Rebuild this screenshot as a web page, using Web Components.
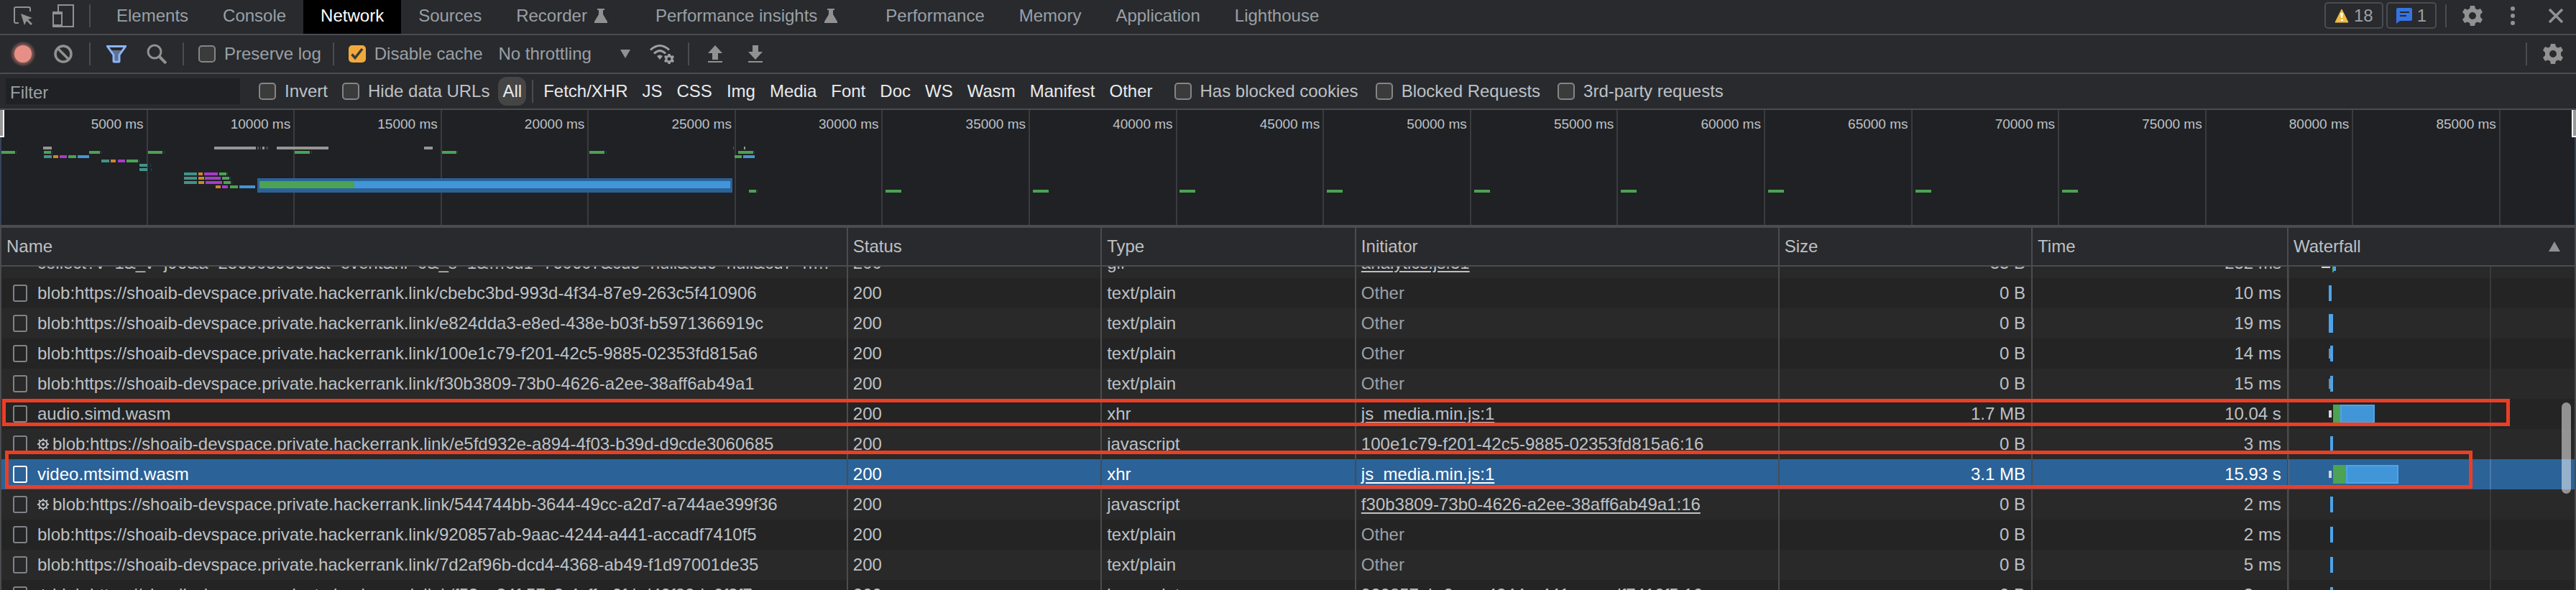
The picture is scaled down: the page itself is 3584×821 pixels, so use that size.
<!DOCTYPE html>
<html lang="en">
<head>
    <meta charset="UTF-8">
    <meta name="viewport" content="width=device-width, initial-scale=1.0">
    <title>DevTools - Network</title>
    <style>
        :root {
            --bar: #292a2d;
            --base: #202124;
            --line: #4a4c50;
            --muted: #9aa0a6;
            --text: #bdc1c6;
            --icon: #919191;
            --selected: #2b6298;
        }
        body {
            margin: 0;
            background: var(--base);
            color: var(--text);
            font: 24px/28px "Liberation Sans", Arial, sans-serif;
        }
    </style>
</head>
<body>

    <dev-tools></dev-tools>

    <template id="dev-tools-template">
        <style>
            :host {
                display: flex;
                flex-direction: column;
                height: 100vh;
                overflow: hidden;
            }
            network-log {
                flex: 1;
                min-height: 0;
            }
        </style>
        <main-tabs></main-tabs>
        <network-toolbar></network-toolbar>
        <filter-bar></filter-bar>
        <network-overview></network-overview>
        <network-log></network-log>
    </template>

    <template id="main-tabs-template">
        <style>
            :host {
                display: flex;
                align-items: center;
                height: 47px;
                padding-left: 4px;
                background: var(--bar);
                border-bottom: 2px solid var(--line);
            }
            nav {
                display: flex;
                align-self: stretch;
                margin-left: 4px;
                flex: 1;
            }
            .counters {
                display: flex;
                gap: 4px;
                margin-right: 4px;
            }
            .counter {
                display: flex;
                align-items: center;
                gap: 7px;
                height: 37px;
                padding: 0 12px;
                border: 2px solid var(--line);
                border-radius: 5px;
                box-sizing: border-box;
                background: none;
                color: var(--muted);
                font: inherit;
            }
            .close {
                margin-left: 4px;
            }
            tool-divider, tool-button, .counters {
                margin-bottom: 4px;
            }
        </style>
        <tool-button icon="inspect" label="Select an element"></tool-button>
        <tool-button icon="device" label="Toggle device toolbar"></tool-button>
        <tool-divider></tool-divider>
        <nav>
            <tab-item>Elements</tab-item>
            <tab-item>Console</tab-item>
            <tab-item active>Network</tab-item>
            <tab-item>Sources</tab-item>
            <tab-item>Recorder<svg-icon slot="icon" name="flask"></svg-icon></tab-item>
            <tab-item>Performance insights<svg-icon slot="icon" name="flask"></svg-icon></tab-item>
            <tab-item>Performance</tab-item>
            <tab-item>Memory</tab-item>
            <tab-item>Application</tab-item>
            <tab-item>Lighthouse</tab-item>
        </nav>
        <div class="counters">
            <button class="counter"><svg-icon name="warning"></svg-icon>18</button>
            <button class="counter"><svg-icon name="message"></svg-icon>1</button>
        </div>
        <tool-divider></tool-divider>
        <tool-button icon="gear" label="Settings"></tool-button>
        <tool-button icon="dots" label="More"></tool-button>
        <tool-button class="close" icon="close" label="Close"></tool-button>
    </template>

    <template id="tab-item-template">
        <style>
            :host {
                display: flex;
            }
            button {
                display: flex;
                align-items: center;
                padding: 0 24px 4px;
                border: 0;
                background: none;
                color: var(--muted);
                font: inherit;
                white-space: nowrap;
            }
            :host([active]) button {
                background: #000;
                color: #fff;
            }
            ::slotted(svg-icon) {
                margin: 0 19px 0 10px;
            }
        </style>
        <button><slot></slot><slot name="icon"></slot></button>
    </template>

    <template id="network-toolbar-template">
        <style>
            :host {
                display: flex;
                align-items: center;
                height: 52px;
                padding: 0 4px;
                background: var(--bar);
                border-bottom: 2px solid var(--line);
                color: var(--muted);
            }
            check-box {
                padding: 0 8px 0 12px;
            }
            .throttling {
                display: grid;
                align-items: center;
                width: 214px;
            }
            select, .throttling svg-icon {
                grid-area: 1 / 1;
            }
            select {
                appearance: none;
                padding: 0 14px;
                border: 0;
                background: none;
                color: inherit;
                font: inherit;
            }
            .throttling svg-icon {
                justify-self: end;
                margin-right: 16px;
                pointer-events: none;
            }
            .space {
                flex: 1;
            }
        </style>
        <tool-button icon="record" label="Stop recording"></tool-button>
        <tool-button icon="clear" label="Clear"></tool-button>
        <tool-divider></tool-divider>
        <tool-button icon="funnel" label="Filter"></tool-button>
        <tool-button icon="search" label="Search"></tool-button>
        <tool-divider></tool-divider>
        <check-box>Preserve log</check-box>
        <tool-divider></tool-divider>
        <check-box checked>Disable cache</check-box>
        <div class="throttling">
            <select aria-label="Throttling"><option>No throttling</option></select>
            <svg-icon name="down"></svg-icon>
        </div>
        <tool-button icon="wifi" label="Network conditions"></tool-button>
        <tool-divider></tool-divider>
        <tool-button icon="import" label="Import HAR file"></tool-button>
        <tool-button icon="export" label="Export HAR file"></tool-button>
        <div class="space"></div>
        <tool-divider></tool-divider>
        <tool-button icon="gear" label="Network settings"></tool-button>
    </template>

    <template id="filter-bar-template">
        <style>
            :host {
                display: flex;
                align-items: center;
                height: 48px;
                padding-left: 8px;
                background: var(--bar);
                border-bottom: 2px solid var(--line);
            }
            input {
                box-sizing: border-box;
                width: 326px;
                height: 36px;
                margin-right: 26px;
                padding: 4px 6px 0;
                border: 0;
                background: var(--base);
                color: var(--text);
                font: inherit;
            }
            input::placeholder {
                color: var(--muted);
            }
            check-box {
                margin-right: 20px;
            }
            .types ~ check-box {
                margin-right: 24px;
            }
            .types {
                display: flex;
                align-items: center;
                gap: 8px;
                margin: 0 24px 0 -8px;
            }
            .types button {
                height: 40px;
                padding: 0 6px;
                border: 0;
                border-radius: 12px;
                background: none;
                color: #e8eaed;
                font: inherit;
            }
            .types button.on {
                background: #454545;
            }
            tool-divider {
                margin: 0;
            }
        </style>
        <input type="text" placeholder="Filter" aria-label="Filter">
        <check-box>Invert</check-box>
        <check-box>Hide data URLs</check-box>
        <div class="types">
            <button class="on">All</button>
            <tool-divider></tool-divider>
            <button>Fetch/XHR</button>
            <button>JS</button>
            <button>CSS</button>
            <button>Img</button>
            <button>Media</button>
            <button>Font</button>
            <button>Doc</button>
            <button>WS</button>
            <button>Wasm</button>
            <button>Manifest</button>
            <button>Other</button>
        </div>
        <check-box>Has blocked cookies</check-box>
        <check-box>Blocked Requests</check-box>
        <check-box>3rd-party requests</check-box>
    </template>

    <template id="check-box-template">
        <style>
            :host {
                display: block;
            }
            label {
                display: flex;
                align-items: center;
                gap: 12px;
                white-space: nowrap;
            }
            .box {
                display: grid;
            }
            input, svg {
                grid-area: 1 / 1;
            }
            input {
                appearance: none;
                box-sizing: border-box;
                width: 24px;
                height: 24px;
                margin: 0;
                border: 2px solid #858585;
                border-radius: 5px;
                background: #3b3b3b;
            }
            input:checked {
                border-color: #f2a93b;
                background: #f2a93b;
            }
            svg {
                display: none;
                pointer-events: none;
            }
            input:checked + svg {
                display: block;
            }
        </style>
        <label>
            <span class="box">
                <input type="checkbox">
                <svg width="24" height="24" viewBox="0 0 24 24"><path d="M4.5 12.5l4.5 5L19 5" fill="none" stroke="#3b3b3b" stroke-width="3.5"/></svg>
            </span>
            <slot></slot>
        </label>
    </template>

    <template id="tool-button-template">
        <style>
            :host {
                display: block;
            }
            button {
                display: grid;
                place-items: center;
                width: 56px;
                height: 40px;
                padding: 0;
                border: 0;
                background: none;
            }
        </style>
        <button><svg-icon></svg-icon></button>
    </template>

    <template id="tool-divider-template">
        <style>
            :host {
                display: block;
                width: 2px;
                height: 32px;
                margin: 0 8px;
                background: var(--line);
            }
        </style>
    </template>

    <template id="network-overview-template">
        <style>
            :host {
                display: grid;
                height: 160px;
                border-bottom: 4px solid var(--line);
                background: var(--base);
            }
            .ruler, svg, .window {
                grid-area: 1 / 1;
            }
            .ruler {
                display: grid;
                grid-template-columns: repeat(17, 5.71%);
                padding-left: 1px;
                font-size: 19px;
                text-align: right;
            }
            .ruler span {
                padding: 6px 4px 0 0;
                border-right: 2px solid #3a3b3e;
            }
            svg {
                width: 100%;
                height: 160px;
                z-index: 1;
            }
            .window {
                display: flex;
                justify-content: space-between;
                border: solid #36445a;
                border-width: 0 2px;
                z-index: 2;
            }
            .grip {
                width: 4px;
                height: 36px;
                margin-left: -2px;
                background: #999;
                border: solid #fff;
                border-width: 0 2px 2px 0;
            }
            .grip.end {
                margin: 0 -2px 0 0;
                border-width: 0 0 2px 2px;
            }
        </style>
        <div class="ruler"></div>
        <svg viewBox="0 0 3584 160" preserveAspectRatio="none" shape-rendering="crispEdges"></svg>
        <div class="window"><div class="grip"></div><div class="grip end"></div></div>
    </template>

    <template id="network-log-template">
        <style>
            :host {
                display: block;
                position: relative;
                border: solid var(--line);
                border-width: 0 2px;
            }
            .scroller {
                height: 100%;
                overflow: hidden;
            }
            table {
                width: 100%;
                table-layout: fixed;
                border-collapse: separate;
                border-spacing: 0;
            }
            th, td {
                box-sizing: border-box;
                padding: 0 8px 0 7px;
                border-right: 2px solid var(--line);
                overflow: hidden;
                white-space: nowrap;
                text-align: left;
                font-weight: normal;
            }
            th:last-child, td:last-child {
                border-right: 0;
            }
            th {
                position: sticky;
                top: 0;
                z-index: 1;
                height: 54px;
                border-bottom: 2px solid var(--line);
                background: var(--bar);
            }
            .sort {
                display: flex;
                justify-content: space-between;
                align-items: center;
                padding-right: 12px;
            }
            td {
                height: 42px;
            }
            tr {
                background: #292929;
            }
            tr:nth-child(even) {
                background: #242424;
            }
            tr.selected {
                background: var(--selected);
                color: #fff;
            }
            .name {
                display: flex;
                align-items: center;
                padding-left: 9px;
            }
            .name input {
                appearance: none;
                flex: none;
                box-sizing: border-box;
                width: 20px;
                height: 24px;
                margin: 0 14px 0 0;
                border: 2px solid #7f8387;
                border-radius: 3px;
            }
            .name .blank {
                visibility: hidden;
            }
            .selected .name input {
                border-color: #fff;
            }
            .name svg-icon {
                margin-right: 5px;
            }
            .name span {
                overflow: hidden;
                text-overflow: ellipsis;
            }
            td.num {
                text-align: right;
            }
            .other {
                color: var(--muted);
            }
            a {
                color: inherit;
                text-underline-offset: 3px;
            }
            td.fall {
                padding: 0;
            }
            td.fall svg {
                display: block;
                width: 100%;
                height: 42px;
            }
            .thumb {
                position: absolute;
                top: 243px;
                right: 5px;
                width: 13px;
                height: 127px;
                border-radius: 7px;
                background: rgba(255, 255, 255, 0.5);
            }
            /* hand drawn markers round the two wasm requests */
            .mark {
                position: absolute;
                z-index: 2;
                box-sizing: border-box;
                border: 5px solid #ec3e24;
            }
            .mark.audio {
                top: 238px;
                left: 1px;
                right: 90px;
                height: 38px;
            }
            .mark.video {
                top: 310px;
                left: 5px;
                right: 142px;
                height: 53px;
            }
        </style>
        <div class="scroller">
            <table>
                <colgroup>
                    <col style="width: 32.9%"><col style="width: 9.87%"><col style="width: 9.88%"><col style="width: 16.45%">
                    <col style="width: 9.84%"><col style="width: 9.94%"><col>
                </colgroup>
                <thead>
                    <tr>
                        <th>Name</th><th>Status</th><th>Type</th><th>Initiator</th><th>Size</th><th>Time</th>
                        <th><div class="sort">Waterfall<svg-icon name="up"></svg-icon></div></th>
                    </tr>
                </thead>
                <tbody></tbody>
            </table>
        </div>
        <div class="mark audio"></div>
        <div class="mark video"></div>
        <div class="thumb"></div>
    </template>

    <script>
        // Every icon as [width, height, markup]
        const GEAR = "M11 0h6l1 4 3 1.5 4-1.5 3 5-3 3v4l3 3-3 5-4-1.5-3 1.5-1 4h-6l-1-4-3-1.5-4 1.5-3-5 3-3v-4l-3-3 3-5 4 1.5 3-1.5zM14 9a5 5 0 1 0 0 10 5 5 0 0 0 0-10z";
        const ICONS = {
            inspect: [28, 28, `<path d="M8 24H4a2 2 0 0 1-2-2V4a2 2 0 0 1 2-2h18a2 2 0 0 1 2 2v4" fill="none" stroke="#919191" stroke-width="2"/><path d="M11 11l16 6-6 2 6 6-2 2-6-6-3 6z"/>`],
            device: [30, 32, `<path d="M8 10V1h21v30H12" fill="none" stroke="#919191" stroke-width="2"/><path d="M0 10h14v22H0zM2 14v14h10V14z" fill-rule="evenodd"/>`],
            flask: [18, 20, `<path d="M4 0h10v2h-2v6l6 10v2H0v-2l6-10V2H4z"/>`],
            warning: [20, 20, `<path d="M10 1l9 18H1z" fill="#f0bd41" stroke="#f0bd41" stroke-linejoin="round"/><path d="M8 6h4l-1 7H9zM9 15h3v2H9z" fill="#fff"/>`],
            message: [22, 22, `<path d="M2 0h18a2 2 0 0 1 2 2v14a2 2 0 0 1-2 2H5l-5 4V2a2 2 0 0 1 2-2z" fill="#3574e2"/><path d="M5 5h13v2H5zM5 10h9v2H5z" fill="#292a2d"/>`],
            gear: [28, 28, `<path fill-rule="evenodd" d="${GEAR}"/>`],
            dots: [6, 28, `<circle cx="3" cy="4" r="3"/><circle cx="3" cy="14" r="3"/><circle cx="3" cy="24" r="3"/>`],
            close: [20, 20, `<path d="M1 1l18 18M19 1L1 19" stroke="#919191" stroke-width="3.5"/>`],
            record: [40, 40, `<defs><radialGradient id="g"><stop offset=".6" stop-color="#e78f86" stop-opacity=".6"/><stop offset="1" stop-color="#e78f86" stop-opacity="0"/></radialGradient></defs><circle cx="20" cy="20" r="18" fill="url(#g)"/><circle cx="20" cy="20" r="12" fill="#e78f86"/>`],
            clear: [26, 26, `<g fill="none" stroke="#919191" stroke-width="3.5"><circle cx="13" cy="13" r="11"/><path d="M5 5l16 16"/></g>`],
            funnel: [28, 26, `<path d="M7 8h14l-3 7v9h-8v-9z" fill="#5f718f"/><path d="M1.5 2.5h25l-8.500 12v8.500q0 1-1 1h-6q-1 0-1-1v-8.500z" fill="none" stroke="#8ab4f8" stroke-width="3"/>`],
            search: [28, 28, `<g fill="none" stroke="#919191" stroke-width="3"><circle cx="11" cy="11" r="9"/><path d="M17 17l10 10" stroke-width="4"/></g>`],
            down: [14, 12, `<path d="M0 0h14L7 12z"/>`],
            up: [16, 14, `<path d="M8 0l8 14H0z"/>`],
            wifi: [34, 28, `<g fill="none" stroke="#9aa0a6" stroke-width="3"><path d="M1 8.500q13-12 26 0M6 13.500q8-8 16 0"/></g><path d="M10 17q4-3 8 0l-4 5z" fill="#9aa0a6"/><circle cx="27" cy="21" r="8" fill="#292a2d"/><g transform="translate(20 14) scale(.5)"><path fill="#9aa0a6" fill-rule="evenodd" d="${GEAR}"/></g>`],
            import: [20, 24, `<path d="M10 0l10 11h-6v9H6v-9H0zM0 22h20v2H0z"/>`],
            export: [20, 24, `<path d="M6 0h8v9h6L10 20 0 9h6zM0 22h20v2H0z"/>`],
            worker: [16, 16, `<circle cx="8" cy="8" r="5.5" fill="none" stroke="#bdc1c6" stroke-width="2"/><circle cx="8" cy="8" r="2" fill="#bdc1c6"/><path d="M8 0v3M8 13v3M0 8h3M13 8h3M2 2l2 2M12 12l2 2M14 2l-2 2M4 12l-2 2" stroke="#bdc1c6" stroke-width="2"/>`]
        };

        const HOST = "blob:https://shoaib-devspace.private.hackerrank.link/";
        const BLUE = "#4ca4ea";
        const TINY = [[58, 10, 4, 22, BLUE]];
        const QUEUED = [[56, 14, 2, 14, "#858585"], [58, 10, 4, 22, BLUE]];

        // name, type, initiator, size, time, waterfall rects, extras
        const REQUESTS = [
            ["collect?v=1&_v=j96&a=2868089866&t=event&ni=0&_s=1&…cd1=760607&cd5=null&cd6=null&cd7=n…", "gif", "analytics.js:31", "35 B", "232 ms", [[46, 24, 12, 4, "#d5d5d5"], [61, 8, 2, 26, "#4ba353"], [62, 10, 4, 22, BLUE]], { link: true, blank: true }],
            [HOST + "cbebc3bd-993d-4f34-87e9-263c5f410906", "text/plain", "Other", "0 B", "10 ms", [[56, 10, 4, 22, BLUE]]],
            [HOST + "e824dda3-e8ed-438e-b03f-b5971366919c", "text/plain", "Other", "0 B", "19 ms", [[56, 8, 6, 26, BLUE]]],
            [HOST + "100e1c79-f201-42c5-9885-02353fd815a6", "text/plain", "Other", "0 B", "14 ms", QUEUED],
            [HOST + "f30b3809-73b0-4626-a2ee-38aff6ab49a1", "text/plain", "Other", "0 B", "15 ms", QUEUED],
            ["audio.simd.wasm", "xhr", "js_media.min.js:1", "1.7 MB", "10.04 s", [[56, 16, 4, 10, "#d5d5d5"], [62, 8, 10, 26, "#4ba353"], [72, 8, 48, 26, BLUE], [74, 10, 44, 22, "#4196d8"]], { link: true }],
            [HOST + "e5fd932e-a894-4f03-b39d-d9cde3060685", "javascript", "100e1c79-f201-42c5-9885-02353fd815a6:16", "0 B", "3 ms", TINY, { link: true, worker: true }],
            ["video.mtsimd.wasm", "xhr", "js_media.min.js:1", "3.1 MB", "15.93 s", [[56, 16, 4, 10, "#d5d5d5"], [62, 8, 18, 26, "#4ba353"], [80, 8, 73, 26, BLUE], [82, 10, 69, 22, "#4196d8"]], { link: true, selected: true }],
            [HOST + "544744bb-3644-49cc-a2d7-a744ae399f36", "javascript", "f30b3809-73b0-4626-a2ee-38aff6ab49a1:16", "0 B", "2 ms", TINY, { link: true, worker: true }],
            [HOST + "920857ab-9aac-4244-a441-accadf7410f5", "text/plain", "Other", "0 B", "2 ms", TINY],
            [HOST + "7d2af96b-dcd4-4368-ab49-f1d97001de35", "text/plain", "Other", "0 B", "5 ms", TINY],
            [HOST + "f53ce34f-57c3-4cff-a0fd-d49f82da0f3f7", "javascript", "920857ab-9aac-4244-a441-accadf7410f5:16", "0 B", "3 ms", TINY, { link: true, worker: true }]
        ];

        // Overview bars: letter is the phase, then [lane, x, width]
        const PHASES = { g: "#4ba353", b: "#4196d8", t: "#429387", o: "#ce852d", p: "#a53dc6", q: "#959595", d: "#1d4766", s: "#5a5a5a" };
        const BARS = {
            q: [[0, 60, 12], [0, 298, 58], [0, 365, 3], [0, 385, 72], [0, 590, 12], [0, 1035, 2]],
            s: [[0, 358, 2], [0, 362, 1], [0, 370, 1], [0, 372, 1], [0, 1020, 1]],
            g: [[1, 0, 21], [1, 61, 10], [1, 124, 15], [1, 206, 20], [1, 410, 21], [1, 615, 20], [1, 820, 21], [1, 1027, 21],
                [2, 95, 11], [2, 1022, 10], [3, 176, 16], [6, 305, 10], [7, 309, 10], [8, 311, 10], [9, 320, 11], [10, 1042, 10]],
            t: [[2, 61, 11], [3, 141, 11], [4, 194, 11], [5, 194, 11], [6, 256, 18], [7, 256, 18], [8, 256, 18]],
            o: [[2, 74, 7], [3, 154, 7], [6, 276, 6], [7, 276, 8], [8, 276, 8], [9, 300, 7]],
            p: [[2, 83, 10], [3, 164, 10], [6, 284, 19], [7, 285, 22], [8, 286, 23], [9, 309, 8]],
            b: [[2, 108, 16], [2, 1034, 16], [9, 333, 22]],
            d: [[1, 22, 1], [1, 72, 1], [1, 140, 1], [1, 228, 1], [1, 433, 1], [1, 636, 1], [1, 843, 1], [1, 1049, 1], [3, 193, 1],
                [4, 209, 1], [5, 210, 1], [6, 316, 1], [7, 320, 1], [8, 322, 1], [10, 1053, 1]]
        };

        const rect = (x, y, w, h, fill) => `<rect x="${x}" y="${y}" width="${w}" height="${h}" fill="${fill}"/>`;

        // Base class: opens a shadow root and clones the template that is named after the tag
        class TemplateElement extends HTMLElement {
            constructor() {
                super();
                const template = document.getElementById(this.localName + "-template");
                this.attachShadow({ mode: "open" }).appendChild(template.content.cloneNode(true));
            }
        }

        customElements.define("svg-icon", class extends HTMLElement {
            static observedAttributes = ["name"];
            constructor() {
                super();
                this.attachShadow({ mode: "open" });
            }
            attributeChangedCallback() {
                const [w, h, markup] = ICONS[this.getAttribute("name")];
                this.shadowRoot.innerHTML = `
                    <style>
                        :host { display: block; flex: none; }
                        svg { display: block; fill: var(--icon); }
                    </style>
                    <svg width="${w}" height="${h}" viewBox="0 0 ${w} ${h}" aria-hidden="true">${markup}</svg>`;
            }
        });

        customElements.define("tool-button", class extends TemplateElement {
            connectedCallback() {
                this.shadowRoot.querySelector("svg-icon").setAttribute("name", this.getAttribute("icon"));
                this.shadowRoot.querySelector("button").setAttribute("aria-label", this.getAttribute("label"));
            }
        });

        customElements.define("check-box", class extends TemplateElement {
            connectedCallback() {
                this.shadowRoot.querySelector("input").checked = this.hasAttribute("checked");
            }
        });

        customElements.define("tool-divider", class extends TemplateElement {});
        customElements.define("tab-item", class extends TemplateElement {});
        customElements.define("main-tabs", class extends TemplateElement {});
        customElements.define("network-toolbar", class extends TemplateElement {});
        customElements.define("filter-bar", class extends TemplateElement {});

        customElements.define("network-overview", class extends TemplateElement {
            connectedCallback() {
                let labels = "";
                for (let i = 1; i <= 17; i++) {
                    labels += `<span>${i * 5000} ms</span>`;
                }
                this.shadowRoot.querySelector(".ruler").innerHTML = labels;

                let bars = "";
                for (const phase in BARS) {
                    for (const [lane, x, w] of BARS[phase]) {
                        bars += rect(x, 51 + lane * 6, w, 4, PHASES[phase]);
                    }
                }
                // the polling request comes back every five seconds
                for (let i = 0; i < 9; i++) {
                    bars += rect(1232 + Math.round(i * 204.65), 111, 22, 4, PHASES.g);
                }
                // selected request
                bars += rect(358, 95, 661, 20, "#2b6298") + rect(361, 99, 132, 10, PHASES.g) + rect(493, 99, 523, 10, PHASES.b);
                this.shadowRoot.querySelector("svg").innerHTML = bars;
            }
        });

        customElements.define("network-log", class extends TemplateElement {
            connectedCallback() {
                this.shadowRoot.querySelector("tbody").innerHTML = REQUESTS.map(this.row).join("");
                // the first request is scrolled half under the header
                this.shadowRoot.querySelector(".scroller").scrollTop = 26;
            }
            row([name, type, initiator, size, time, fall, extra = {}]) {
                const label = name.replaceAll("&", "&amp;");
                const grid = extra.selected ? "#4a79a8" : "#3a3a3a";
                return `
                    <tr class="${extra.selected ? "selected" : ""}">
                        <td><div class="name">
                            <input type="checkbox" class="${extra.blank ? "blank" : ""}" aria-label="${label}">
                            ${extra.worker ? `<svg-icon name="worker"></svg-icon>` : ""}
                            <span>${label}</span>
                        </div></td>
                        <td>200</td>
                        <td>${type}</td>
                        <td>${extra.link ? `<a href="#">${initiator}</a>` : `<span class="other">${initiator}</span>`}</td>
                        <td class="num">${size}</td>
                        <td class="num">${time}</td>
                        <td class="fall">
                            <svg viewBox="0 0 398 42" preserveAspectRatio="none" shape-rendering="crispEdges">
                                ${rect(0, 0, 1, 42, grid)}${rect(280, 0, 2, 42, grid)}${fall.map(bar => rect(...bar)).join("")}
                            </svg>
                        </td>
                    </tr>`;
            }
        });

        customElements.define("dev-tools", class extends TemplateElement {});
    </script>

</body>
</html>
